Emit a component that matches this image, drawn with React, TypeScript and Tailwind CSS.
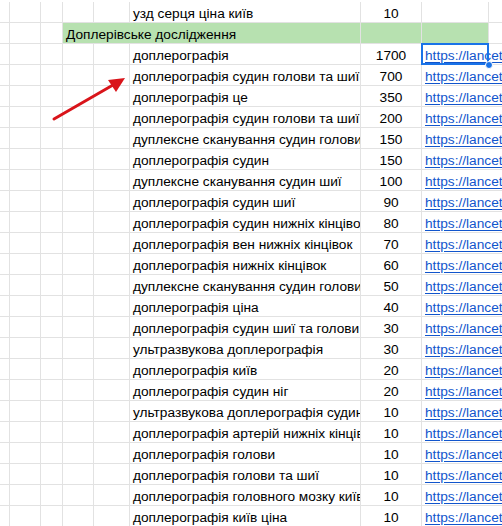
import React from 'react';

type Row = { keyword: string; volume: number };

const rows: Row[] = [
  { keyword: 'доплерографія', volume: 1700 },
  { keyword: 'доплерографія судин голови та шиї', volume: 700 },
  { keyword: 'доплерографія це', volume: 350 },
  { keyword: 'доплерографія судин голови та шиї ніг', volume: 200 },
  { keyword: 'дуплексне сканування судин голови', volume: 150 },
  { keyword: 'доплерографія судин', volume: 150 },
  { keyword: 'дуплексне сканування судин шиї', volume: 100 },
  { keyword: 'доплерографія судин шиї', volume: 90 },
  { keyword: 'доплерографія судин нижніх кінцівок', volume: 80 },
  { keyword: 'доплерографія вен нижніх кінцівок', volume: 70 },
  { keyword: 'доплерографія нижніх кінцівок', volume: 60 },
  { keyword: 'дуплексне сканування судин голови', volume: 50 },
  { keyword: 'доплерографія ціна', volume: 40 },
  { keyword: 'доплерографія судин шиї та голови', volume: 30 },
  { keyword: 'ультразвукова доплерографія', volume: 30 },
  { keyword: 'доплерографія київ', volume: 20 },
  { keyword: 'доплерографія судин ніг', volume: 20 },
  { keyword: 'ультразвукова доплерографія судин', volume: 10 },
  { keyword: 'доплерографія артерій нижніх кінцівок', volume: 10 },
  { keyword: 'доплерографія голови', volume: 10 },
  { keyword: 'доплерографія голови та шиї', volume: 10 },
  { keyword: 'доплерографія головного мозку київ', volume: 10 },
  { keyword: 'доплерографія київ ціна', volume: 10 },
];

const cell = 'h-full border-r border-[#e2e2e2] shrink-0 pt-[4px]';

function EmptyCells() {
  return (
    <>
      <div className={`${cell} w-[10px]`} />
      <div className={`${cell} w-[31px]`} />
      <div className={`${cell} w-[22px]`} />
      <div className={`${cell} w-[31px]`} />
      <div className={`${cell} w-[36px]`} />
    </>
  );
}

export default function App() {
  return (
    <div
      className="relative w-[502px] h-[526px] overflow-hidden bg-white pt-[2px] text-[13.7px] text-[#000]"
      style={{ fontFamily: '"Liberation Sans", Arial, sans-serif' }}
    >
      {/* previous section tail */}
      <div className="flex h-[21px] border-b border-[#e2e2e2] items-center">
        <EmptyCells />
        <div className={`${cell} w-[231px] flex items-center px-[3px] overflow-hidden whitespace-nowrap`}>
          узд серця ціна київ
        </div>
        <div className={`${cell} w-[61px] flex items-center justify-center`}>10</div>
        <div className={`${cell} w-[67px]`} />
        <div className="h-full flex-1" />
      </div>

      {/* section header */}
      <div className="flex h-[21px] border-b border-[#e2e2e2] items-center">
        <div className={`${cell} w-[10px]`} />
        <div className={`${cell} w-[31px]`} />
        <div className={`${cell} w-[22px]`} />
        <div className={`${cell} w-[298px] bg-[#b7e1b0] border-[#d4e8d2] flex items-center px-[3px] whitespace-nowrap`}>
          Доплерівське дослідження
        </div>
        <div className={`${cell} w-[61px] bg-[#b7e1b0] border-[#cfe3cc]`} />
        <div className={`${cell} w-[67px] bg-[#b7e1b0]`} />
        <div className="h-full flex-1" />
      </div>

      {rows.map((row, i) => (
        <div key={i} className="flex h-[21px] border-b border-[#e2e2e2] items-center">
          <EmptyCells />
          <div className={`${cell} w-[231px] flex items-center px-[3px] overflow-hidden whitespace-nowrap`}>
            {row.keyword}
          </div>
          <div className={`${cell} w-[61px] flex items-center justify-center`}>{row.volume}</div>
          <div className="h-full flex-1 flex items-center pt-[4px] pl-[3px] whitespace-nowrap overflow-hidden">
            <span className="text-[#1155cc] underline underline-offset-2">https://lancet.ua/</span>
          </div>
        </div>
      ))}

      {/* selected cell */}
      <div className="absolute left-[421px] top-[43px] w-[68px] h-[22px] border-2 border-[#1a73e8]" />
      <div className="absolute left-[485px] top-[61px] w-[8px] h-[8px] rounded-full bg-[#1a73e8] border border-white" />

      {/* annotation arrow */}
      <svg className="absolute left-0 top-0" width="502" height="526">
        <line x1="54" y1="119" x2="113" y2="85" stroke="#d9141a" strokeWidth="3" strokeLinecap="round" />
        <polygon points="125,78 108,80 116,92" fill="#d9141a" />
      </svg>
    </div>
  );
}
